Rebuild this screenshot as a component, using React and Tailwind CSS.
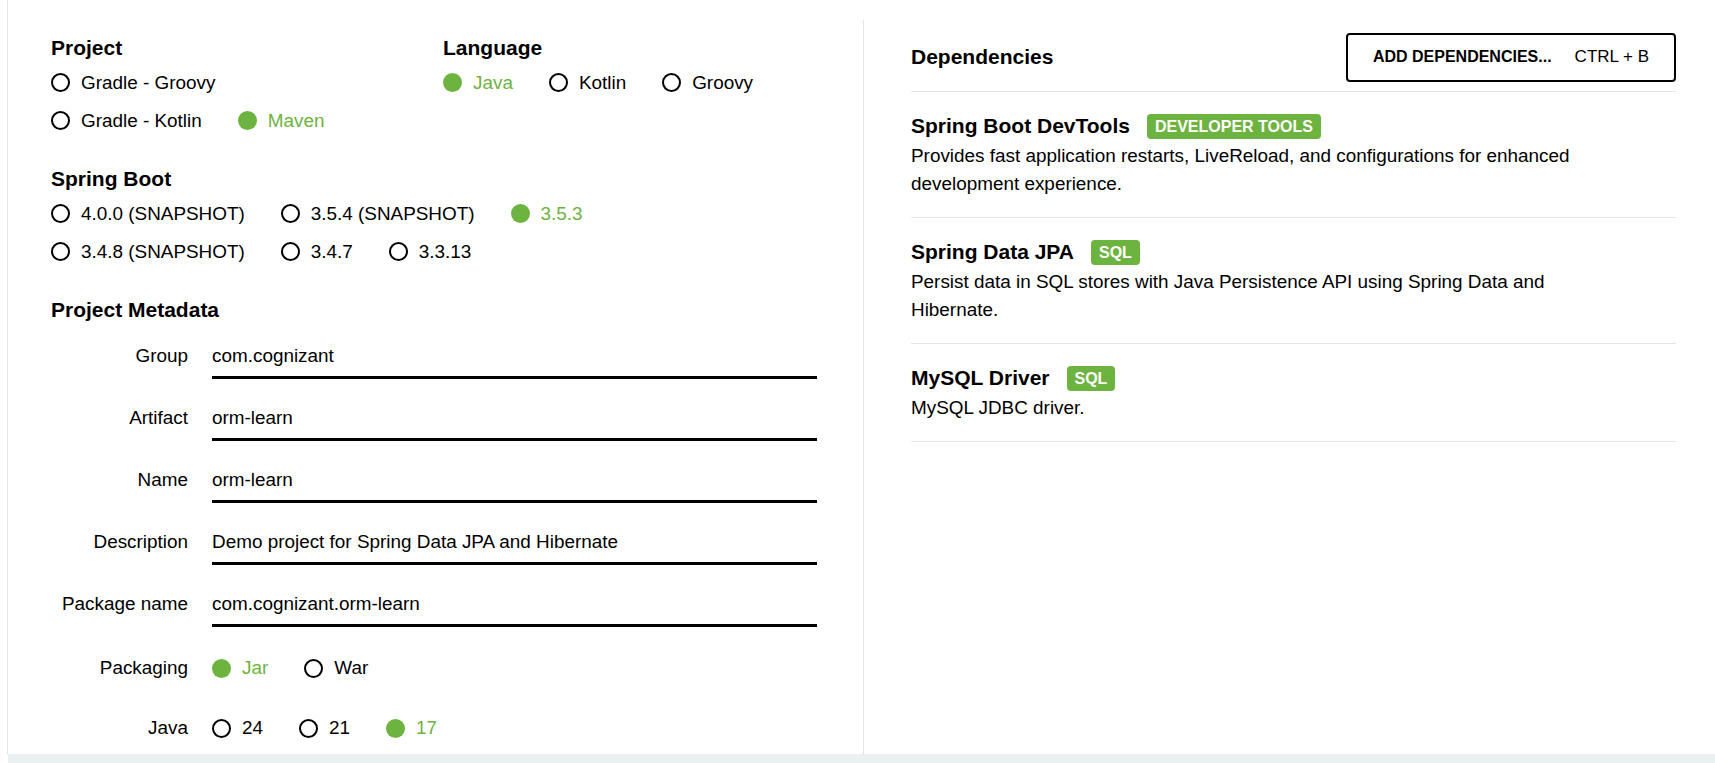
import React from "react";

const Radio = ({ label, checked = false }) => (
  <div className="flex items-center mr-[36px]">
    <span
      className={`w-[19px] h-[19px] rounded-full shrink-0 ${
        checked ? "bg-[#6db33f]" : "border-2 border-black"
      }`}
    />
    <span className={`ml-[11px] whitespace-nowrap ${checked ? "text-[#6db33f]" : "text-black"}`}>
      {label}
    </span>
  </div>
);

const RadioRow = ({ children }) => <div className="flex items-center h-[38px]">{children}</div>;

const Heading = ({ children, className = "" }) => (
  <h2 className={`text-[21px] font-bold leading-[28px] text-black ${className}`}>{children}</h2>
);

const Field = ({ label, value, first = false }) => (
  <div className={`flex items-start ${first ? "mt-[18px]" : "mt-[25px]"}`}>
    <div className="w-[137px] text-right leading-[28px] text-black shrink-0">{label}</div>
    <div className="ml-[24px] flex-1 border-b-[3px] border-black pb-[6px] leading-[28px] text-black">
      {value}
    </div>
  </div>
);

const Badge = ({ children }) => (
  <span className="ml-[17px] h-[25px] px-[8px] rounded-[4px] bg-[#6db33f] text-white text-[16px] font-bold leading-[25px]">
    {children}
  </span>
);

const Dependency = ({ title, badge, description }) => (
  <div className="pt-[20px] pb-[19px] border-b border-[#e0e8e7]">
    <div className="flex items-center">
      <span className="text-[21px] font-bold leading-[28px] text-black">{title}</span>
      <Badge>{badge}</Badge>
    </div>
    <p className="mt-[2px] max-w-[680px] leading-[28px] text-black">{description}</p>
  </div>
);

export default function App() {
  return (
    <div className="w-[1715px] h-[763px] bg-white flex flex-col overflow-hidden font-['Liberation_Sans',Arial,sans-serif] text-[18.9px]">
      <div className="flex-1 flex ml-[7px] border-l border-[#e0e8e7]">
        {/* Left column: project options and metadata */}
        <div className="w-[855px] pl-[43px] pr-[46px] pt-[34px]">
          <div className="flex">
            <div className="w-[392px]">
              <Heading>Project</Heading>
              <div className="mt-[2px]">
                <RadioRow>
                  <Radio label="Gradle - Groovy" />
                </RadioRow>
                <RadioRow>
                  <Radio label="Gradle - Kotlin" />
                  <Radio label="Maven" checked />
                </RadioRow>
              </div>
            </div>
            <div>
              <Heading>Language</Heading>
              <div className="mt-[2px]">
                <RadioRow>
                  <Radio label="Java" checked />
                  <Radio label="Kotlin" />
                  <Radio label="Groovy" />
                </RadioRow>
              </div>
            </div>
          </div>

          <Heading className="mt-[25px]">Spring Boot</Heading>
          <div className="mt-[2px]">
            <RadioRow>
              <Radio label="4.0.0 (SNAPSHOT)" />
              <Radio label="3.5.4 (SNAPSHOT)" />
              <Radio label="3.5.3" checked />
            </RadioRow>
            <RadioRow>
              <Radio label="3.4.8 (SNAPSHOT)" />
              <Radio label="3.4.7" />
              <Radio label="3.3.13" />
            </RadioRow>
          </div>

          <Heading className="mt-[25px]">Project Metadata</Heading>
          <Field first label="Group" value="com.cognizant" />
          <Field label="Artifact" value="orm-learn" />
          <Field label="Name" value="orm-learn" />
          <Field label="Description" value="Demo project for Spring Data JPA and Hibernate" />
          <Field label="Package name" value="com.cognizant.orm-learn" />

          <div className="flex items-center h-[28px] mt-[27px]">
            <div className="w-[137px] text-right text-black shrink-0">Packaging</div>
            <div className="ml-[24px] flex items-center">
              <Radio label="Jar" checked />
              <Radio label="War" />
            </div>
          </div>
          <div className="flex items-center h-[28px] mt-[32px]">
            <div className="w-[137px] text-right text-black shrink-0">Java</div>
            <div className="ml-[24px] flex items-center">
              <Radio label="24" />
              <Radio label="21" />
              <Radio label="17" checked />
            </div>
          </div>
        </div>

        {/* Right column: dependencies */}
        <div className="flex-1 mt-[20px] border-l border-[#e0e8e7] pl-[47px] pr-[39px] pt-[13px]">
          <div className="flex items-center justify-between h-[59px] pb-[10px] border-b border-[#e0e8e7]">
            <span className="text-[21px] font-bold text-black">Dependencies</span>
            <button className="w-[330px] h-[49px] border-2 border-black rounded-[4px] flex items-center justify-center bg-white">
              <span className="text-[16px] font-bold text-black">ADD DEPENDENCIES...</span>
              <span className="ml-[23px] text-[17px] text-black">CTRL + B</span>
            </button>
          </div>
          <Dependency
            title="Spring Boot DevTools"
            badge="DEVELOPER TOOLS"
            description="Provides fast application restarts, LiveReload, and configurations for enhanced development experience."
          />
          <Dependency
            title="Spring Data JPA"
            badge="SQL"
            description="Persist data in SQL stores with Java Persistence API using Spring Data and Hibernate."
          />
          <Dependency title="MySQL Driver" badge="SQL" description="MySQL JDBC driver." />
        </div>
      </div>
      <div className="h-[9px] ml-[8px] bg-[#ebf1f0] shrink-0" />
    </div>
  );
}
